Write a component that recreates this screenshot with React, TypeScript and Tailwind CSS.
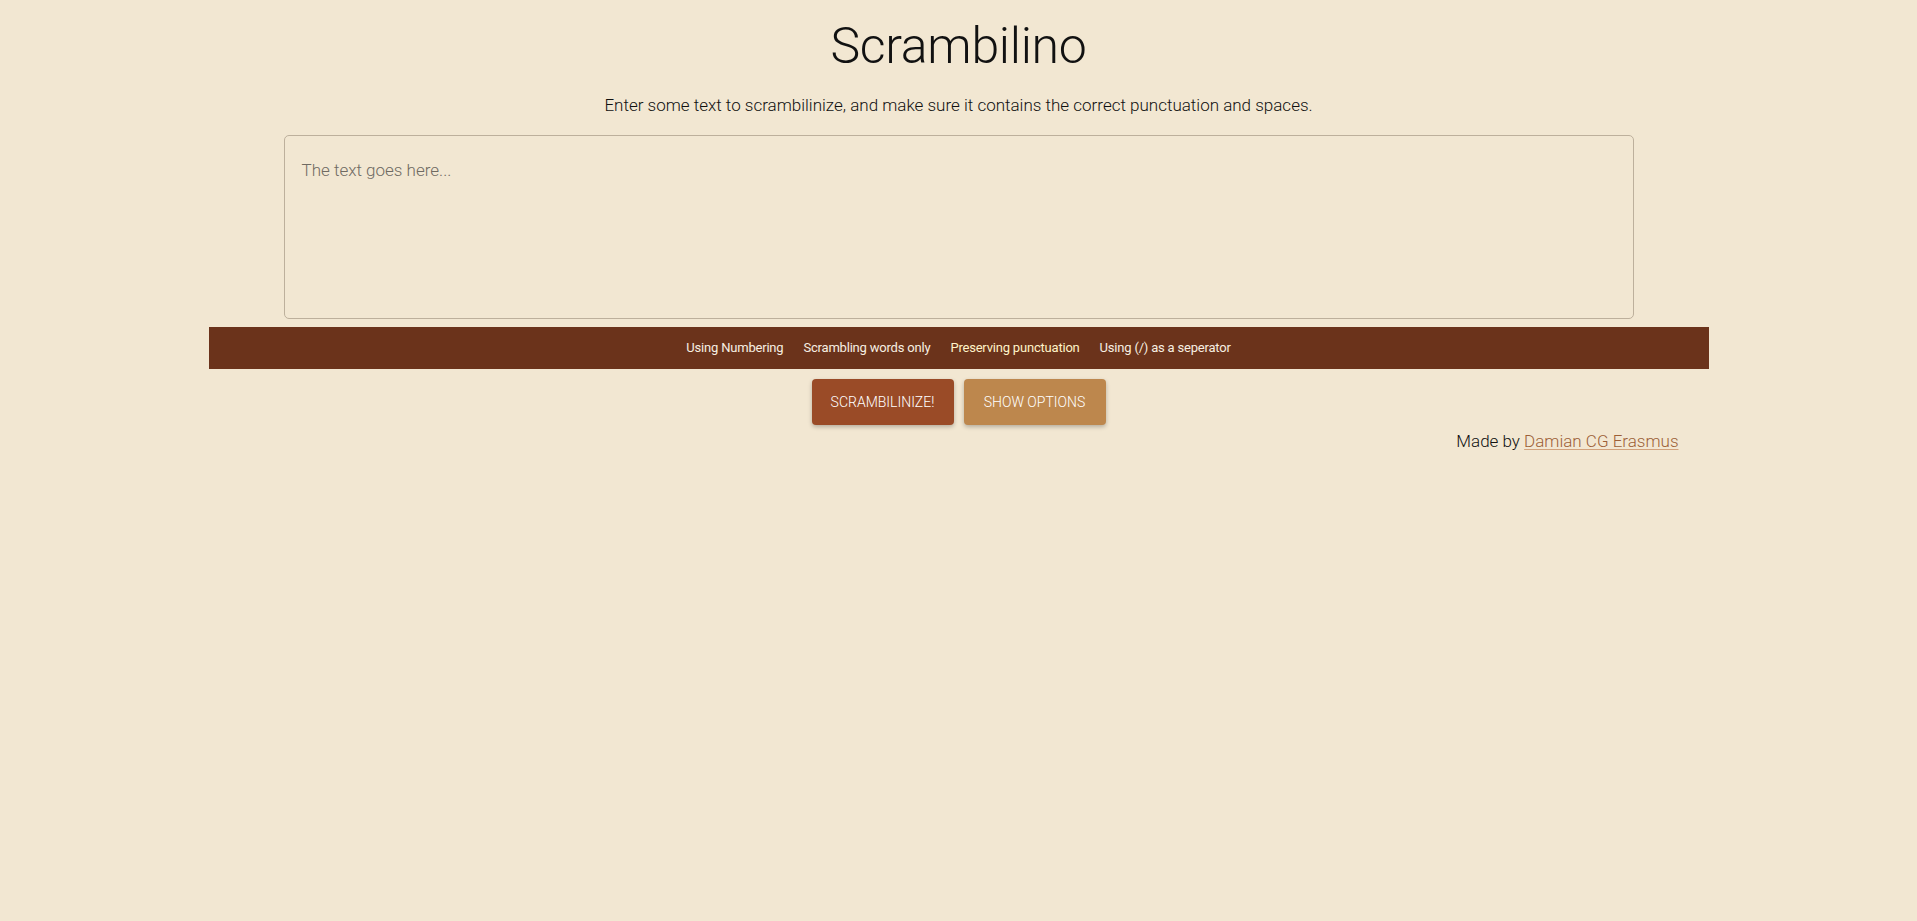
import { useState } from "react";

const options = [
  { label: "Using Numbering", tone: "text-[#f7efe2]" },
  { label: "Scrambling words only", tone: "text-[#f7efe2]" },
  { label: "Preserving punctuation", tone: "text-[#fff3c8]" },
  { label: "Using (/) as a seperator", tone: "text-[#f7efe2]" },
];

export default function App() {
  const [text, setText] = useState<string>("");

  return (
    <div className="min-h-[921px] w-full bg-[#f2e7d2] font-['Roboto',sans-serif] text-[#111]">
      <div className="mx-auto flex w-[1500px] flex-col items-center">
        <h1 className="mt-[10px] h-[72px] text-[50px] leading-[72px] font-light tracking-[-0.3px]">
          Scrambilino
        </h1>
        <p className="mt-[11px] text-[17px] leading-[24px] font-light">
          Enter some text to scrambilinize, and make sure it contains the correct
          punctuation and spaces.
        </p>
        <textarea
          className="mt-[18px] h-[184px] w-[1350px] resize-none rounded-[5px] border border-[#bdb09c] bg-transparent px-[17px] py-[22px] text-[17px] font-light placeholder:text-[#6f6a62] focus:outline-none"
          placeholder="The text goes here..."
          value={text}
          onChange={(e) => setText(e.target.value)}
        />
        <div className="mt-[8px] flex h-[42px] w-full items-center justify-center gap-[20px] bg-[#6b331b] text-[13px] font-normal tracking-[-0.2px]">
          {options.map((o) => (
            <span key={o.label} className={o.tone}>
              {o.label}
            </span>
          ))}
        </div>
        <div className="mt-[10px] flex gap-[10px]">
          <button className="h-[46px] w-[142px] rounded-[4px] bg-[#9a4b27] text-[14px] font-light text-white shadow-[0_2px_4px_rgba(0,0,0,0.25)]">
            SCRAMBILINIZE!
          </button>
          <button className="h-[46px] w-[142px] rounded-[4px] bg-[#bd874d] text-[14px] font-light text-white shadow-[0_2px_4px_rgba(0,0,0,0.25)]">
            SHOW OPTIONS
          </button>
        </div>
        <p className="mt-[4px] self-end pr-[30px] text-[17px] leading-[24px] font-light">
          Made by{" "}
          <a
            href="#"
            className="text-[#9c5f37] underline decoration-[#d2a27c] underline-offset-2"
          >
            Damian CG Erasmus
          </a>
        </p>
      </div>
    </div>
  );
}
